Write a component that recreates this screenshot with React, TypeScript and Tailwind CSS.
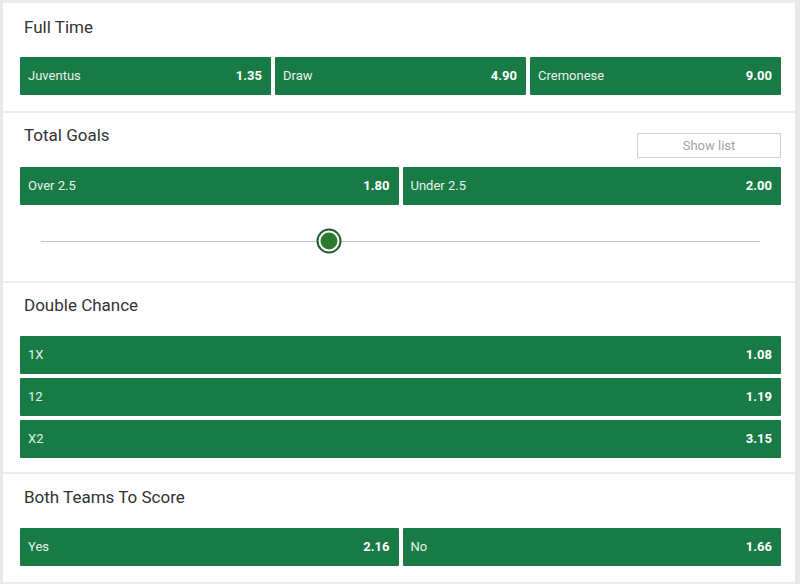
import React from 'react';

interface Odd {
  label: string;
  price: string;
}

const OddButton: React.FC<Odd> = ({ label, price }) => (
  <button className="flex-1 basis-0 shrink-0 min-h-[38px] h-[38px] bg-[#187a45] rounded-[1px] flex items-center justify-between pl-[8px] pr-[9px] text-[13px]">
    <span className="text-[#e8f3ec]">{label}</span>
    <span className="font-bold text-white">{price}</span>
  </button>
);

const Title: React.FC<{ children: React.ReactNode }> = ({ children }) => (
  <h2 className="text-[17px] leading-[24px] text-[#333] pl-[4px] pt-[1px]">{children}</h2>
);

const Divider = () => <div className="h-[2px] bg-[#ececec]" />;

export default function App() {
  const fullTime: Odd[] = [
    { label: 'Juventus', price: '1.35' },
    { label: 'Draw', price: '4.90' },
    { label: 'Cremonese', price: '9.00' },
  ];
  const goals: Odd[] = [
    { label: 'Over 2.5', price: '1.80' },
    { label: 'Under 2.5', price: '2.00' },
  ];
  const doubleChance: Odd[] = [
    { label: '1X', price: '1.08' },
    { label: '12', price: '1.19' },
    { label: 'X2', price: '3.15' },
  ];
  const btts: Odd[] = [
    { label: 'Yes', price: '2.16' },
    { label: 'No', price: '1.66' },
  ];

  return (
    <div
      className="w-[800px] h-[584px] bg-[#e9e9e9] pl-[3px] pr-[5px] overflow-hidden"
      style={{ fontFamily: 'Roboto, "Liberation Sans", sans-serif' }}
    >
      <div className="bg-white h-full">
        <div className="h-[3px] bg-[#ececec]" />

        {/* Full Time */}
        <section className="pl-[17px] pr-[14px] pt-[11px] pb-[16px]">
          <Title>Full Time</Title>
          <div className="mt-[18px] flex gap-[4px]">
            {fullTime.map((o) => (
              <OddButton key={o.label} {...o} />
            ))}
          </div>
        </section>
        <Divider />

        {/* Total Goals */}
        <section className="pl-[17px] pr-[14px] pt-[9px] pb-[4px]">
          <div className="flex items-start justify-between">
            <Title>Total Goals</Title>
            <button className="mt-[11px] w-[144px] h-[25px] border border-[#cfcfcf] text-[13px] text-[#a3a3a3] bg-white">
              Show list
            </button>
          </div>
          <div className="mt-[9px] flex gap-[4px]">
            {goals.map((o) => (
              <OddButton key={o.label} {...o} />
            ))}
          </div>
          <div className="h-[72px] px-[21px] flex items-center">
            <div className="relative w-full h-[1px] bg-[#c4c4c4]">
              <div className="absolute left-[40%] top-0 -translate-x-1/2 -translate-y-1/2 w-[25px] h-[25px] rounded-full bg-white border-[2px] border-[#1f5c2c] flex items-center justify-center">
                <div className="w-[17px] h-[17px] rounded-full bg-[#2a7a2f]" />
              </div>
            </div>
          </div>
        </section>
        <Divider />

        {/* Double Chance */}
        <section className="pl-[17px] pr-[14px] pt-[9px] pb-[14px]">
          <Title>Double Chance</Title>
          <div className="mt-[19px] flex flex-col gap-[4px]">
            {doubleChance.map((o) => (
              <OddButton key={o.label} {...o} />
            ))}
          </div>
        </section>
        <Divider />

        {/* Both Teams To Score */}
        <section className="pl-[17px] pr-[14px] pt-[10px] pb-[16px]">
          <Title>Both Teams To Score</Title>
          <div className="mt-[19px] flex gap-[4px]">
            {btts.map((o) => (
              <OddButton key={o.label} {...o} />
            ))}
          </div>
        </section>
        <Divider />
      </div>
    </div>
  );
}
